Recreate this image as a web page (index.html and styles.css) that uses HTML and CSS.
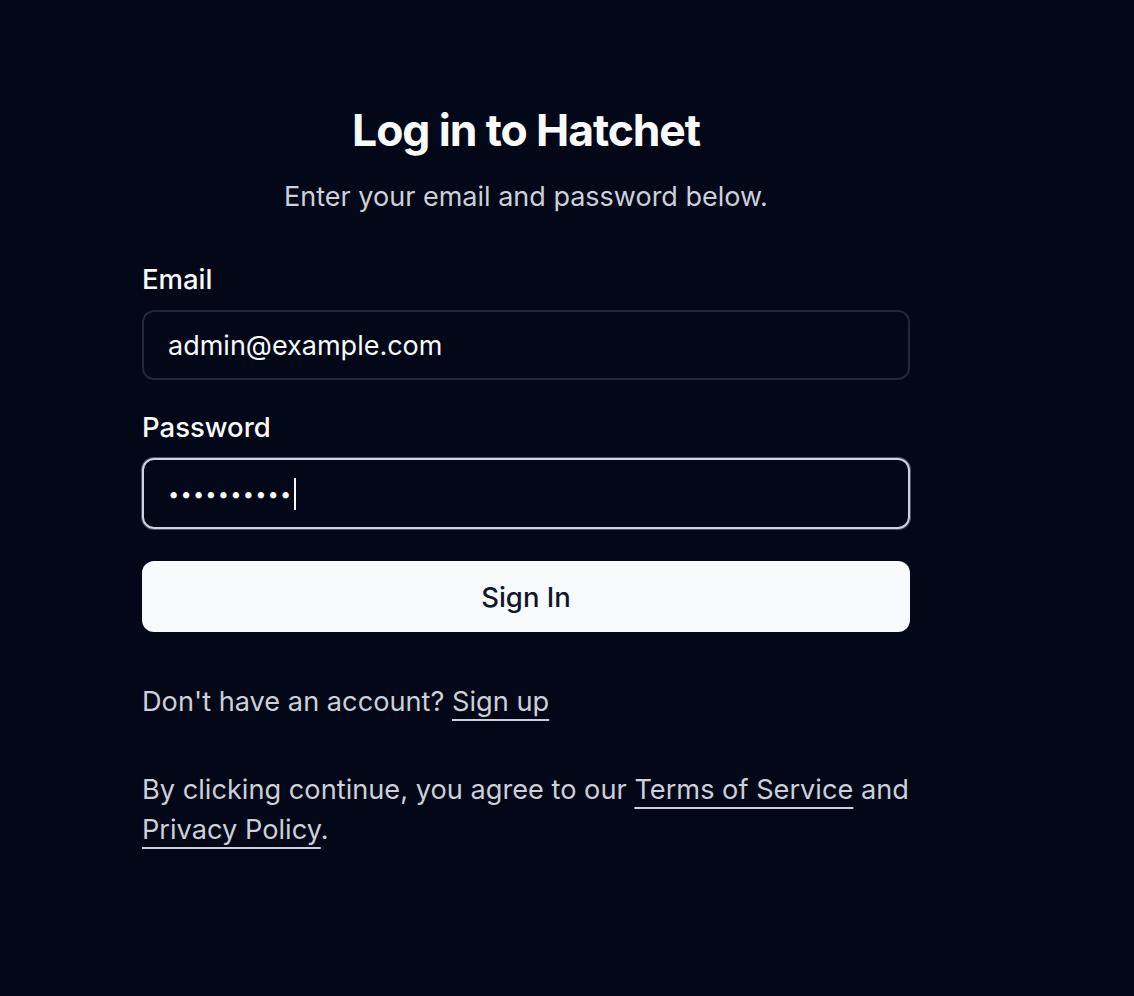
FILE: index.html
```html
<!DOCTYPE html>
<html>
<head>
<meta charset="utf-8">
<link rel="stylesheet" href="styles.css">
</head>
<body>
<main class="page">
  <div class="card">
    <header class="head">
      <h1 class="title">Log in to Hatchet</h1>
      <p class="subtitle">Enter your email and password below.</p>
    </header>
    <form class="form">
      <div class="field">
        <label class="label">Email</label>
        <div class="input">admin@example.com</div>
      </div>
      <div class="field">
        <label class="label">Password</label>
        <div class="input input-focus"><span class="dots">••••••••••</span><span class="caret"></span></div>
      </div>
      <button class="btn" type="button">Sign In</button>
    </form>
    <p class="signup">Don't have an account? <a class="link">Sign up</a></p>
    <p class="terms">By clicking continue, you agree to our <a class="link">Terms of Service</a> and <a class="link">Privacy Policy</a>.</p>
  </div>
</main>
</body>
</html>
```
FILE: styles.css
```css
html, body {
  margin: 0;
  padding: 0;
  background: #020817;
  height: 100%;
}
body {
  font-family: Inter, "Noto Sans", sans-serif;
  color: #f8fafc;
}
.page {
  padding: 100px 0 0 142px;
}
.card {
  width: 768px;
  display: flex;
  flex-direction: column;
}
.head {
  display: flex;
  flex-direction: column;
  align-items: center;
  text-align: center;
}
.title {
  margin: 0;
  font-size: 44.5px;
  line-height: 60px;
  font-weight: 700;
  letter-spacing: -0.025em;
  color: #f8fafc;
}
.subtitle {
  margin: 17px 0 0;
  font-size: 27px;
  line-height: 40px;
  color: #cbd0d9;
}
.form {
  margin-top: 48px;
  display: flex;
  flex-direction: column;
}
.field {
  display: flex;
  flex-direction: column;
  gap: 17px;
  margin-bottom: 33px;
}
.field:last-of-type {
  margin-bottom: 32px;
}
.label {
  font-size: 27.5px;
  line-height: 28px;
  font-weight: 500;
  color: #f8fafc;
}
.input {
  box-sizing: border-box;
  height: 70px;
  border: 2px solid #1e293b;
  border-radius: 12px;
  padding: 0 24px;
  display: flex;
  align-items: center;
  font-size: 27px;
  color: #f8fafc;
}
.input-focus {
  border-color: #cdd3dd;
  box-shadow: 0 0 0 1px #4a5466;
  height: 71px;
}
.dots {
  letter-spacing: 1.2px;
  font-size: 20px;
}
.caret {
  width: 2px;
  height: 32px;
  background: #f8fafc;
  margin-left: 1px;
}
.btn {
  height: 71px;
  border: 0;
  border-radius: 12px;
  background: #f8fafc;
  color: #0f172a;
  font-family: inherit;
  font-size: 27.5px;
  font-weight: 500;
}
.signup, .terms {
  margin: 0;
  font-size: 27.2px;
  line-height: 40px;
  color: #cbd0d9;
}
.signup { margin-top: 50px; }
.terms { margin-top: 48px; }
.link {
  text-decoration: underline;
  text-underline-offset: 8px;
  text-decoration-thickness: 2px;
}
```
